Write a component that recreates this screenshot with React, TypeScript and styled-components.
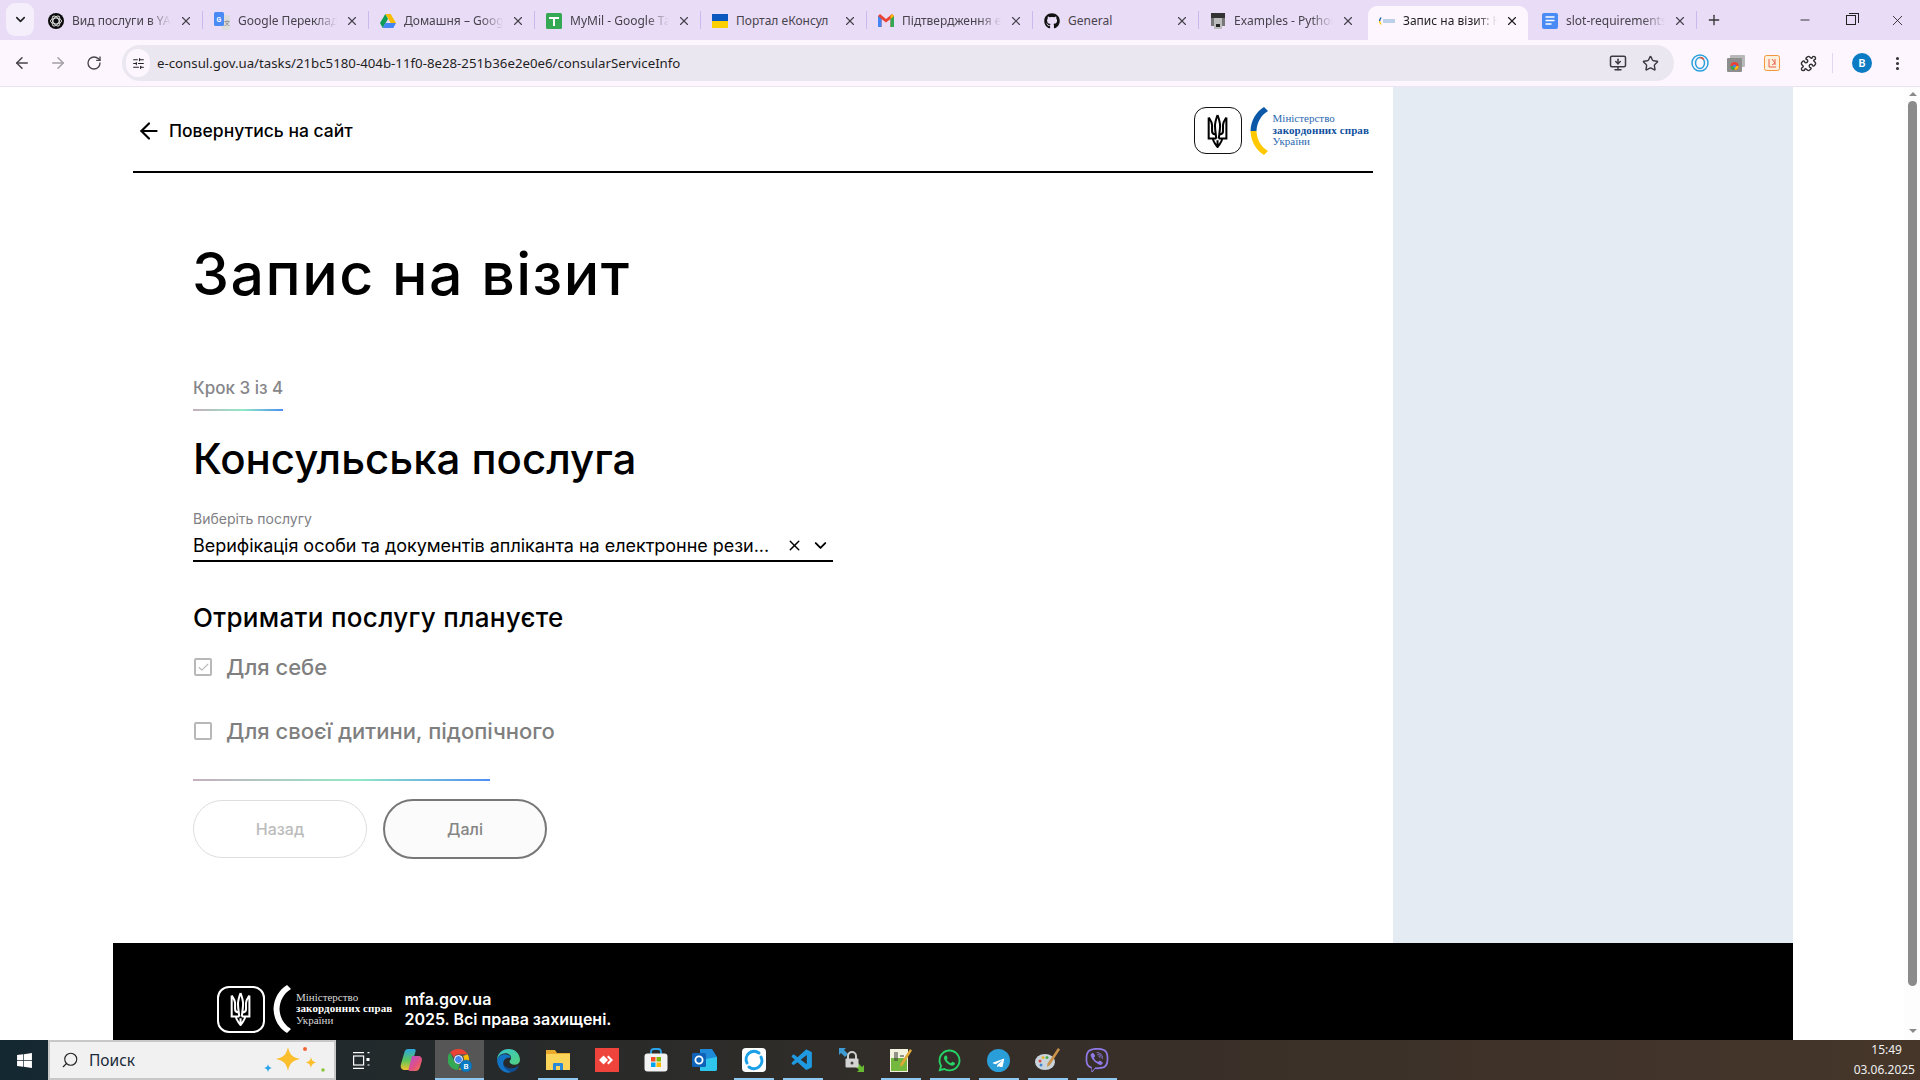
import React from "react";
import styled, { createGlobalStyle } from "styled-components";
import { ArrowLeft, ArrowRight, ChevronDown, MonitorDown, Plus, RotateCw, Search, Star, X, Minus, Puzzle, EllipsisVertical, SlidersHorizontal, Check } from "lucide-react";
import { FaGithub, FaWindows, FaWhatsapp, FaViber, FaTelegramPlane } from "react-icons/fa";
import { VscVscode } from "react-icons/vsc";

const Global = createGlobalStyle`
  html, body { margin: 0; padding: 0; overflow: hidden; background: #fff; }
  * { box-sizing: border-box; }
  #root { width: 1920px; height: 1080px; }
`;

const Screen = styled.div`
  width: 1920px; height: 1080px; display: flex; flex-direction: column; overflow: hidden;
  font-family: Inter, "Liberation Sans", sans-serif; color: #000;
`;

/* Browser chrome */
const TabStrip = styled.div`
  height: 40px; background: #e9dcf6; display: flex; align-items: flex-end; flex-shrink: 0; position: relative;
  font-family: "Noto Sans", "Open Sans", sans-serif;
`;
const TabSearch = styled.div`
  width: 28px; height: 33px; margin: 0 3px 1px 6px; border-radius: 9px; background: #f5eefb;
  display: flex; align-items: center; justify-content: center; color: #1f1f1f; align-self: center;
`;
const TabCell = styled.div<{ $sep: boolean }>`
  width: 166px; height: 34px; display: flex; align-items: center; padding: 0 0 6px;
  &::after { content: ""; width: 1px; height: 18px; flex-shrink: 0; background: ${p => (p.$sep ? "#c9b9ee" : "transparent")}; }
`;
const TabBody = styled.div<{ $active: boolean }>`
  flex: 1; min-width: 0; height: 34px; display: flex; align-items: center; gap: 8px; padding: 0 9px 5px 11px;
  margin: 0 ${p => (p.$active ? "2px" : "0")} -6px ${p => (p.$active ? "3px" : "0")};
  border-radius: 9px 9px 0 0; background: ${p => (p.$active ? "#fdf6fe" : "transparent")};
  color: ${p => (p.$active ? "#1f1f1f" : "#47434c")};
`;
const Favicon = styled.span`
  width: 16px; height: 16px; flex-shrink: 0; display: flex; align-items: center; justify-content: center;
`;
const TabTitle = styled.span<{ $fade: boolean }>`
  flex: 1; min-width: 0; font-size: 12px; white-space: nowrap; overflow: hidden;
  mask-image: ${p => (p.$fade ? "linear-gradient(90deg,#000 78%,transparent 100%)" : "none")};
`;
const NewTab = styled.div`
  width: 34px; height: 34px; display: flex; align-items: center; justify-content: center; color: #333; margin: 0 0 3px;
`;
const WindowControls = styled.div`
  margin-left: auto; display: flex; height: 40px; align-items: center; color: #222; align-self: flex-start;
`;
const WindowBtn = styled.div`
  width: 46px; height: 32px; display: flex; align-items: center; justify-content: center;
`;
const RestoreIcon = styled.span`
  width: 10px; height: 10px; border: 1px solid #222; position: relative; display: block;
  &::before { content: ""; position: absolute; left: 2px; top: -3px; width: 9px; height: 9px; border-top: 1px solid #222; border-right: 1px solid #222; }
`;
const Toolbar = styled.div`
  height: 47px; flex-shrink: 0; background: #fdf6fe; display: flex; align-items: center; padding: 0 0 0 4px; border-bottom: 1px solid #ece4f0;
`;
const NavBtn = styled.div<{ $dim?: boolean }>`
  width: 36px; height: 34px; display: flex; align-items: center; justify-content: center; color: ${p => (p.$dim ? "#a29fa6" : "#47434c")};
`;
const UrlPill = styled.div`
  width: 1552px; height: 36px; margin-left: 10px; border-radius: 18px; background: #ebe7f1; display: flex; align-items: center; padding: 0 8px 0 4px;
  font-family: "Noto Sans", "Open Sans", sans-serif; font-size: 13.25px; color: #1f1f1f;
`;
const SiteInfo = styled.div`
  width: 24px; height: 28px; margin-right: 7px; border-radius: 14px; background: #fdf6fe; display: flex; align-items: center; justify-content: center; color: #222;
`;
const UrlText = styled.span` flex: 1; white-space: nowrap; `;
const PillAction = styled.div`
  width: 32px; height: 32px; display: flex; align-items: center; justify-content: center; color: #3c3a40;
`;
const ExtArea = styled.div` display: flex; align-items: center; margin-left: 8px; flex: 1; `;
const ExtBtn = styled.div`
  width: 36px; height: 34px; display: flex; align-items: center; justify-content: center; color: #333;
`;
const ToolDivider = styled.span` width: 1px; height: 20px; background: #e1d8ee; margin: 0 12px 0 6px; `;
const Avatar = styled.div`
  width: 20px; height: 20px; border-radius: 50%; background: #0b7cc4; color: #fff; font: 600 11px Roboto, sans-serif;
  display: flex; align-items: center; justify-content: center; margin: 0 17px 0 7px;
`;

/* Page */
const Viewport = styled.div` flex: 1; min-height: 0; display: flex; background: #fff; `;
const Site = styled.div` flex: 1; padding: 0 111px 0 113px; display: flex; flex-direction: column; min-width: 0; `;
const MainRow = styled.div` flex: 1; min-height: 0; display: flex; `;
const Content = styled.main` width: 1280px; padding: 0 20px; `;
const Aside = styled.aside` flex: 1; background: #e4ebf3; `;
const Header = styled.header`
  height: 86px; border-bottom: 2px solid #000; display: flex; align-items: center; justify-content: space-between; padding: 3px 4px 0 3px;
`;
const BackLink = styled.div`
  display: flex; align-items: center; gap: 7px; font-size: 17.5px; font-weight: 500;
`;
const Ministry = styled.div` display: flex; align-items: center; `;
const EmblemBox = styled.div<{ $dark?: boolean }>`
  width: 48px; height: 47px; border-radius: 12px; display: flex; align-items: center; justify-content: center;
  border: ${p => (p.$dark ? "2px solid #fff" : "1px solid #111")}; color: ${p => (p.$dark ? "#fff" : "#000")};
`;
const ArcMark = styled.svg` width: 18px; height: 48px; margin: 0 5px 0 8px; flex-shrink: 0; `;
const MinistryText = styled.div<{ $dark?: boolean }>`
  font-family: "Liberation Serif", serif; font-size: 11px; line-height: 11.5px; white-space: nowrap;
  color: ${p => (p.$dark ? "#d8d8d8" : "#2a68b0")};
  b { display: block; font-weight: 700; color: ${p => (p.$dark ? "#fff" : "#0f4f9e")}; letter-spacing: 0.1px; }
`;
const Form = styled.div` padding: 0 0 0 60px; `;
const Title = styled.h1`
  margin: 0; padding-top: 64px; font-size: 59px; line-height: 74px; font-weight: 500; letter-spacing: 1.5px; margin-left: -1px;
`;
const Step = styled.div`
  margin-top: 64px; width: 90px; font-size: 17px; font-weight: 500; line-height: 26px; color: #86868a; white-space: nowrap;
`;
const Gradient = styled.div<{ $w: number }>`
  width: ${p => p.$w}px; height: 2px; background: linear-gradient(90deg, #c6afbd 0%, #93e8c6 55%, #4d8ff2 100%);
`;
const StepLine = styled(Gradient)` margin-top: 8px; `;
const Heading = styled.h2`
  margin: 22px 0 0; font-size: 42px; line-height: 52px; font-weight: 500;
`;
const FieldLabel = styled.div`
  margin-top: 25px; font-size: 14px; line-height: 18px; color: #808084;
`;
const SelectRow = styled.div`
  width: 640px; height: 34px; display: flex; align-items: center; border-bottom: 2px solid #000; font-size: 18px; font-weight: 400; padding-top: 3px;
`;
const SelectValue = styled.span` flex: 1; white-space: nowrap; overflow: hidden; letter-spacing: -0.03px; `;
const SelectIcon = styled.span` display: flex; width: 26px; justify-content: center; margin-right: 0; `;
const Sub = styled.h3`
  margin: 39px 0 0; font-size: 26px; line-height: 34px; font-weight: 500; letter-spacing: 0.33px;
`;
const CheckRow = styled.label<{ $mt: number }>`
  margin-top: ${p => p.$mt}px; display: flex; align-items: center; gap: 14px; height: 28px; font-size: 22px; font-weight: 500; color: #7f7f80;
`;
const CheckBox = styled.span`
  width: 18px; height: 18px; margin-left: 1px; border: 2px solid #b8b8b8; border-radius: 2px; display: flex; align-items: center; justify-content: center; color: #b8b8b8;
`;
const BottomLine = styled(Gradient)` margin-top: 34px; `;
const Buttons = styled.div` margin-top: 18px; display: flex; align-items: center; gap: 16px; `;
const BackBtn = styled.div`
  width: 174px; height: 58px; border-radius: 29px; border: 1px solid #dedede; display: flex; align-items: center; justify-content: center;
  font-size: 16px; font-weight: 500; color: #bcbcbc;
`;
const NextBtn = styled.div`
  width: 164px; height: 60px; border-radius: 30px; border: 2px solid #777; background: #fbfbfb; display: flex; align-items: center; justify-content: center;
  font-size: 16px; font-weight: 500; color: #858585;
`;
const Footer = styled.footer`
  height: 97px; flex-shrink: 0; background: #000; padding: 42px 0 0 104px; display: flex; align-items: flex-start; color: #fff;
`;
const FooterLogo = styled.div` display: flex; align-items: center; `;
const FooterText = styled.div`
  margin-left: 12px; padding-top: 5px; font-size: 16px; font-weight: 600; line-height: 19.5px; white-space: nowrap;
`;
const Scrollbar = styled.div`
  width: 16px; background: #fdfdfd; display: flex; flex-direction: column; align-items: center; color: #8a8a8a; padding: 5px 0 0;
`;
const ArrowUp = styled.span` width: 0; height: 0; border: 4px solid transparent; border-top: 0; border-bottom: 4px solid #8a8a8a; margin-left: 1px; `;
const ArrowDown = styled.span` width: 0; height: 0; border: 4px solid transparent; border-bottom: 0; border-top: 4px solid #8a8a8a; margin: 43px 0 0 1px; `;
const Thumb = styled.div` width: 9px; height: 885px; margin: 5px 0 0 1px; background: #8b8b8b; border-radius: 5px; `;

/* Taskbar */
const Taskbar = styled.div`
  height: 40px; flex-shrink: 0; display: flex; align-items: stretch;
  background: linear-gradient(90deg, #142832 0%, #262a2a 25%, #362e28 55%, #46362a 100%);
`;
const StartBtn = styled.div` width: 48px; display: flex; align-items: center; justify-content: center; color: #fff; `;
const SearchBox = styled.div`
  width: 288px; background: #f1f1f1; border: 2px solid #c8c8c8; display: flex; align-items: center; padding-left: 11px; gap: 10px;
  font: 400 15.5px "Noto Sans", "Open Sans", sans-serif; color: #1a2b3a;
`;
const SearchLabel = styled.span` flex: 1; `;
const TileRow = styled.div` display: flex; padding-left: 1px; `;
const Tile = styled.div<{ $active?: boolean; $run?: "wide" | "norm" }>`
  width: 49px; display: flex; align-items: center; justify-content: center; position: relative;
  background: ${p => (p.$active ? "#565656" : "transparent")};
  &::after {
    content: ""; position: absolute; bottom: 0; height: 2px; background: #8fc9f2;
    width: ${p => (p.$run === "wide" ? "49px" : p.$run === "norm" ? "40px" : "0")};
  }
`;
const Clock = styled.div`
  margin-left: auto; width: 72px; padding-right: 5px; display: flex; flex-direction: column; align-items: flex-end; justify-content: center; gap: 4px;
  font: 400 12px/16px "Noto Sans", "Open Sans", sans-serif; color: #efefef; text-align: center;
`;
const ClockTime = styled.span` padding-right: 13px; `;

/* Drawings */
const Trident = ({ size = 30 }: { size?: number }) => (
  <svg width={size * 0.62} height={size} viewBox="0 0 25 40" fill="none" stroke="currentColor" strokeWidth="2.4">
    <path d="M12.5 1 C11 5 9.5 9 9.5 14 C9.5 19 10.5 24 11 29 M12.5 1 C14 5 15.5 9 15.5 14 C15.5 19 14.5 24 14 29" />
    <path d="M2 4 V29 H11 M2 4 C4 7 6 9 6 13 V20 C6 23 8 24 10 24" />
    <path d="M23 4 V29 H14 M23 4 C21 7 19 9 19 13 V20 C19 23 17 24 15 24" />
    <path d="M7 29 C7 33 10 35 12.5 39 C15 35 18 33 18 29 M12.5 31 V37" />
  </svg>
);
const Arc = ({ dark }: { dark?: boolean }) => (
  <ArcMark viewBox="0 0 18 48">
    <path d="M14 0 L18 4 C10 9 7 16 6.5 24 H0.5 C1 13 6 5 14 0Z" fill={dark ? "#fff" : "#0b57a8"} />
    <path d="M14 48 L18 44 C10 39 7 32 6.5 24 H0.5 C1 35 6 43 14 48Z" fill={dark ? "#fff" : "#ffc800"} />
  </ArcMark>
);

const favicons: Record<string, React.ReactNode> = {
  gpt: <svg width="16" height="16" viewBox="0 0 16 16"><circle cx="8" cy="8" r="8" fill="#0b0b0b" /><g fill="none" stroke="#ddd" strokeWidth="1"><ellipse cx="8" cy="8" rx="5.5" ry="3" /><ellipse cx="8" cy="8" rx="5.5" ry="3" transform="rotate(60 8 8)" /><ellipse cx="8" cy="8" rx="5.5" ry="3" transform="rotate(120 8 8)" /></g></svg>,
  translate: <svg width="16" height="18" viewBox="0 0 16 18"><path d="M6 3h9a1 1 0 0 1 1 1v13a1 1 0 0 1-1 1H8z" fill="#ddd" /><rect x="0" y="0" width="10" height="14" rx="1.5" fill="#4a8af4" /><text x="2.5" y="9.5" fontSize="7" fontWeight="700" fill="#fff" fontFamily="Roboto">G</text><text x="10" y="13" fontSize="6" fill="#777" fontFamily="Noto Sans CJK SC">文</text></svg>,
  drive: <svg width="16" height="14" viewBox="0 0 16 14"><path d="M5.3 0h5.4l5.3 9h-5.3z" fill="#fbbc04" /><path d="M5.3 0 0 9l2.7 5 5.3-9z" fill="#0f9d58" /><path d="M2.7 14h10.6l2.7-5H5.4z" fill="#4285f4" /></svg>,
  sheets: <svg width="16" height="16" viewBox="0 0 16 16"><rect width="16" height="16" rx="1.5" fill="#34a853" /><path d="M3 4h10v2H9v7H7V6H3z" fill="#fff" /></svg>,
  flag: <svg width="16" height="14" viewBox="0 0 16 14"><rect width="16" height="7" fill="#0b57c0" /><rect y="7" width="16" height="7" fill="#fcd000" /></svg>,
  gmail: <svg width="16" height="13" viewBox="0 0 16 13"><path d="M0 2v11h3.5V5L8 8.5 12.5 5v8H16V2l-2-2-6 5-6-5z" fill="#ea4335" /><path d="M0 2v11h3.5V5z" fill="#4285f4" /><path d="M12.5 5v8H16V2z" fill="#34a853" /><path d="M14 0l2 2-3.5 3V2z" fill="#fbbc04" /></svg>,
  github: <FaGithub size={16} color="#111" />,
  examples: <svg width="14" height="16" viewBox="0 0 14 16"><rect y="0" width="14" height="5" fill="#333" /><rect y="5" width="14" height="8" fill="#777" /><path d="M3 5h8v11H3z" fill="#bbb" /><rect x="5" y="11" width="4" height="3" fill="#222" /></svg>,
  current: <svg width="16" height="8" viewBox="0 0 16 8"><path d="M2 0C0 2 0 3 0 4h1.3c0-1 .4-2 1.2-3z" fill="#0b57a8" /><path d="M2 8C0 6 0 5 0 4h1.3c0 1 .4 2 1.2 3z" fill="#ffc800" /><rect x="4" y="2" width="12" height="4" fill="#bcd0ea" /></svg>,
  docs: <svg width="16" height="16" viewBox="0 0 16 16"><rect width="16" height="16" rx="2" fill="#4a8af4" /><path d="M3.5 4h9M3.5 7.5h9M3.5 11h6" stroke="#fff" strokeWidth="1.6" /></svg>,
};

const tabs = [
  { icon: "gpt", title: "Вид послуги в YAML" },
  { icon: "translate", title: "Google Перекладач" },
  { icon: "drive", title: "Домашня – Google Диск" },
  { icon: "sheets", title: "MyMil - Google Таблиці" },
  { icon: "flag", title: "Портал еКонсул", noFade: true },
  { icon: "gmail", title: "Підтвердження електронної" },
  { icon: "github", title: "General", noFade: true },
  { icon: "examples", title: "Examples - Python" },
  { icon: "current", title: "Запис на візит: Консульська", active: true },
  { icon: "docs", title: "slot-requirements" },
];

const Chrome = () => (
  <svg width="24" height="24" viewBox="0 0 24 24">
    <path d="M10.5 1A10.5 10.5 0 0 1 19.6 6.2H10.5A4.6 4.6 0 0 0 6.2 9.2L2.1 4.6A10.5 10.5 0 0 1 10.5 1Z" fill="#ea4335" />
    <path d="M19.6 6.2A10.5 10.5 0 0 1 10.8 22L15 13.8A4.6 4.6 0 0 0 15 8Z" fill="#fbbc04" />
    <path d="M2.1 4.6 6.4 13.6A4.6 4.6 0 0 0 12 15.9L9.8 22A10.5 10.5 0 0 1 2.1 4.6Z" fill="#34a853" />
    <circle cx="10.5" cy="11.5" r="4" fill="#4285f4" stroke="#fff" strokeWidth="1" />
    <circle cx="18" cy="18" r="6" fill="#0b7cc4" stroke="#1a5d88" strokeWidth=".5" />
    <text x="18" y="21" fontSize="8" fontWeight="600" fill="#fff" textAnchor="middle" fontFamily="Roboto">B</text>
  </svg>
);
const Copilot = () => (
  <svg width="24" height="24" viewBox="0 0 24 24">
    <defs>
      <linearGradient id="cpa" x1="0" y1="0" x2="0" y2="1"><stop offset="0" stopColor="#2aa6e0" /><stop offset=".55" stopColor="#5fc65a" /><stop offset="1" stopColor="#f5c02c" /></linearGradient>
      <linearGradient id="cpb" x1="0" y1="0" x2="1" y2="1"><stop offset="0" stopColor="#b24cd8" /><stop offset=".6" stopColor="#e4527c" /><stop offset="1" stopColor="#f08a3c" /></linearGradient>
    </defs>
    <path d="M9 1h6c1 0 1.5.6 1.8 1.5L11 22H6C2.5 22 1 19.5 2 16L5.5 4C6 2 7.3 1 9 1Z" fill="url(#cpa)" />
    <path d="M13 8h6c3 0 4.5 2 3.8 5l-2 6.5C20 22 18.5 23 16.5 23H11c-1.5 0-1.8-1-1.4-2.2L13 8Z" fill="url(#cpb)" />
  </svg>
);
const Edge = () => (
  <svg width="25" height="25" viewBox="0 0 24 24">
    <defs>
      <linearGradient id="edg" x1="0" y1="0" x2="1" y2="1"><stop offset="0" stopColor="#37c6d0" /><stop offset="1" stopColor="#52d17c" /></linearGradient>
    </defs>
    <path d="M12 1C18.5 1 23 5.6 23 11.5c0 3-2.5 4.5-5 4.5-3 0-5-1-5-3 0-1.5 1.5-1.5 1.5-3.5C14.5 6.5 12 5 9 5 5.5 5 2.5 7 1 11 1.5 5.5 6 1 12 1Z" fill="url(#edg)" />
    <path d="M1 11c2-4 5-5 8-5 3 0 5 1.5 5 3.5-3-1-7 1-7 5 0 4 3.5 7.5 8 8.5-1 .5-2 .8-3 .8C6 23.8 1 18 1 11Z" fill="#1273c4" />
    <path d="M15 23c-4.5-1-8-4.5-8-8.5 0 3 4 5.5 8 5 3-.3 5.5-1 7-3-1 3.5-3.5 5.8-7 6.5Z" fill="#0c4f95" />
  </svg>
);
const Folder = () => (
  <svg width="26" height="24" viewBox="0 0 26 24">
    <path d="M1 2h9l2 3h13v17H1z" fill="#e9a92c" />
    <rect x="1" y="6" width="24" height="16" fill="#fbd55a" />
    <path d="M8 22v-6a1 1 0 0 1 1-1h8a1 1 0 0 1 1 1v6h-3v-4h-4v4z" fill="#2a88d8" />
  </svg>
);
const AnyDesk = () => (
  <svg width="24" height="24" viewBox="0 0 24 24">
    <rect width="24" height="24" fill="#ef443b" />
    <path d="M8.5 7.5 13 12l-4.5 4.5L4 12z" fill="#fff" />
    <path d="M13.5 7.5 18 12l-4.5 4.5-1.5-1.5 3-3-3-3z" fill="#fff" />
  </svg>
);
const Store = () => (
  <svg width="24" height="24" viewBox="0 0 24 24">
    <path d="M7 6V4a3 3 0 0 1 3-3h4a3 3 0 0 1 3 3v2" fill="none" stroke="#2aa3ea" strokeWidth="1.8" />
    <rect x="0.5" y="5.5" width="23" height="18" rx="3" fill="#f3f3f3" />
    <rect x="7" y="9" width="4.5" height="4.5" fill="#f25022" />
    <rect x="12.5" y="9" width="4.5" height="4.5" fill="#7fba00" />
    <rect x="7" y="14.5" width="4.5" height="4.5" fill="#00a4ef" />
    <rect x="12.5" y="14.5" width="4.5" height="4.5" fill="#ffb900" />
  </svg>
);
const Outlook = () => (
  <svg width="25" height="24" viewBox="0 0 25 24">
    <path d="M8 1h12l5 8v12a2 2 0 0 1-2 2H9a1 1 0 0 1-1-1z" fill="#1f8ad8" />
    <path d="M8 12 25 9v12a2 2 0 0 1-2 2H9a1 1 0 0 1-1-1z" fill="#2fc6ee" />
    <rect x="0" y="5" width="14" height="14" rx="1.5" fill="#0e63b8" />
    <circle cx="7" cy="12" r="3.6" fill="none" stroke="#fff" strokeWidth="1.8" />
  </svg>
);
const Ring = () => (
  <svg width="24" height="24" viewBox="0 0 24 24">
    <rect width="24" height="24" rx="4" fill="#fff" />
    <path d="M5 15A8 8 0 0 1 17 5" fill="none" stroke="#1aa0e8" strokeWidth="3" strokeLinecap="round" />
    <path d="M19 9A8 8 0 0 1 7 19" fill="none" stroke="#1aa0e8" strokeWidth="3" strokeLinecap="round" />
  </svg>
);
const LockSwap = () => (
  <svg width="25" height="24" viewBox="0 0 25 24">
    <path d="M0 0h7L5 2l4 4-3 3-4-4-2 2z" fill="#3e9ad2" />
    <path d="M25 24h-7l2-2-4-4 3-3 4 4 2-2z" fill="#66bb32" />
    <path d="M9 11V8a4 4 0 0 1 8 0v3" fill="none" stroke="#cfcfcf" strokeWidth="2" />
    <rect x="6.5" y="10.5" width="13" height="9" rx="1" fill="#d4d4d4" />
    <circle cx="13" cy="15" r="1.5" fill="#444" />
  </svg>
);
const Notepad = () => (
  <svg width="22" height="24" viewBox="0 0 22 24">
    <rect x="0" y="1" width="18" height="23" fill="#f2f2df" />
    <rect x="1" y="10" width="16" height="13" fill="#74b83e" />
    <path d="M5 4v9M7 4v9M10 8h4" stroke="#333" strokeWidth="1" />
    <path d="M20 1 22 2.5 13 17l-3 2 .5-3.5z" fill="#e0a838" />
  </svg>
);
const Palette = () => (
  <svg width="25" height="24" viewBox="0 0 25 24">
    <ellipse cx="10" cy="14" rx="10" ry="8" fill="#c9d4dc" />
    <circle cx="5" cy="13" r="1.5" fill="#d84b3c" />
    <circle cx="8" cy="9.5" r="1.5" fill="#e8b13a" />
    <circle cx="12" cy="9.5" r="1.5" fill="#4eaa4c" />
    <circle cx="6" cy="17" r="1.5" fill="#3d86d0" />
    <path d="M23 0l2 1.5L15 17l-3 2 .5-3.5z" fill="#c89248" />
  </svg>
);
const TelegramRound = () => (
  <svg width="23" height="23" viewBox="0 0 23 23">
    <circle cx="11.5" cy="11.5" r="11.5" fill="#2a9ed8" />
    <foreignObject x="5" y="5" width="13" height="13"><FaTelegramPlane size={13} color="#fff" /></foreignObject>
  </svg>
);
const Sparkles = () => (
  <svg width="70" height="36" viewBox="0 0 70 36">
    <path d="M24 5c1.6 7.5 4.4 10.4 12 12-7.6 1.6-10.4 4.4-12 12-1.6-7.6-4.4-10.4-12-12 7.6-1.6 10.4-4.500 12-12Z" fill="#fbbf2e" />
    <path d="M47 15c.7 3.5 2 4.8 5.5 5.5-3.5.7-4.8 2-5.5 5.5-.7-3.5-2-4.8-5.5-5.5 3.5-.7 4.8-2 5.5-5.5Z" fill="#fbbf2e" />
    <path d="M4 22c.5 2.6 1.5 3.6 4 4-2.5.5-3.5 1.5-4 4-.5-2.5-1.5-3.5-4-4 2.5-.4 3.5-1.4 4-4Z" fill="#2aa3ea" />
    <circle cx="41" cy="7" r="2" fill="#ee6a34" />
    <circle cx="59" cy="28" r="1.8" fill="#8cc63f" />
  </svg>
);
const TaskView = () => (
  <svg width="17" height="17" viewBox="0 0 17 17" fill="none" stroke="#fff" strokeWidth="1.2">
    <path d="M0 .6h11M0 16.4h11" />
    <rect x=".6" y="4" width="10" height="9" />
    <rect x="13.5" y="6" width="3" height="3" fill="#fff" stroke="none" />
    <path d="M14.5 .6h2M14.500 13h2" />
  </svg>
);

const taskItems: { node: React.ReactNode; run?: "wide" | "norm"; active?: boolean }[] = [
  { node: <TaskView /> },
  { node: <Copilot /> },
  { node: <Chrome />, run: "wide", active: true },
  { node: <Edge /> },
  { node: <Folder />, run: "norm" },
  { node: <AnyDesk /> },
  { node: <Store /> },
  { node: <Outlook /> },
  { node: <Ring />, run: "norm" },
  { node: <VscVscode size={25} color="#1f9ae0" />, run: "norm" },
  { node: <LockSwap /> },
  { node: <Notepad />, run: "norm" },
  { node: <FaWhatsapp size={25} color="#25d366" />, run: "norm" },
  { node: <TelegramRound />, run: "norm" },
  { node: <Palette />, run: "norm" },
  { node: <FaViber size={24} color="#8f7ae6" />, run: "norm" },
];

export default function App() {
  return (
    <Screen>
      <Global />
      <TabStrip>
        <TabSearch><ChevronDown size={15} strokeWidth={2.5} /></TabSearch>
        {tabs.map((t, i) => (
          <TabCell key={t.title} $sep={!t.active && !tabs[i + 1]?.active}>
            <TabBody $active={!!t.active}>
              <Favicon>{favicons[t.icon]}</Favicon>
              <TabTitle $fade={!t.noFade}>{t.title}</TabTitle>
              <X size={14} strokeWidth={2} />
            </TabBody>
          </TabCell>
        ))}
        <NewTab><Plus size={16} strokeWidth={2} /></NewTab>
        <WindowControls>
          <WindowBtn><Minus size={14} strokeWidth={1.5} /></WindowBtn>
          <WindowBtn><RestoreIcon /></WindowBtn>
          <WindowBtn><X size={17} strokeWidth={1.2} /></WindowBtn>
        </WindowControls>
      </TabStrip>
      <Toolbar>
        <NavBtn><ArrowLeft size={18} /></NavBtn>
        <NavBtn $dim><ArrowRight size={18} /></NavBtn>
        <NavBtn><RotateCw size={16} /></NavBtn>
        <UrlPill>
          <SiteInfo><SlidersHorizontal size={13} /></SiteInfo>
          <UrlText>e-consul.gov.ua/tasks/21bc5180-404b-11f0-8e28-251b36e2e0e6/consularServiceInfo</UrlText>
          <PillAction><MonitorDown size={18} /></PillAction>
          <PillAction><Star size={17} /></PillAction>
        </UrlPill>
        <ExtArea>
          <ExtBtn>
            <svg width="18" height="18" viewBox="0 0 18 18" fill="none"><circle cx="9" cy="9" r="8" stroke="#2aa0dc" strokeWidth="1.5" /><ellipse cx="9" cy="9" rx="4.5" ry="5.5" stroke="#2aa0dc" strokeWidth="1.5" /><path d="M9 3.5a5 5 0 0 1 4 2" stroke="#e05a3a" strokeWidth="1.5" /></svg>
          </ExtBtn>
          <ExtBtn>
            <svg width="18" height="17" viewBox="0 0 18 17"><rect x="3" y="0" width="15" height="12" rx="1" fill="#b8b8b8" /><rect x="0" y="3" width="15" height="14" rx="1" fill="#8e8e8e" /><circle cx="7.5" cy="11" r="4" fill="#ea4335" /><path d="M7.5 11v4a4 4 0 0 0 4-4z" fill="#fbbc04" /><path d="M7.5 11v4a4 4 0 0 1-4-4z" fill="#34a853" /><circle cx="7.5" cy="11" r="1.5" fill="#4285f4" /></svg>
          </ExtBtn>
          <ExtBtn>
            <svg width="16" height="16" viewBox="0 0 16 16"><rect x=".5" y=".5" width="15" height="15" rx="2" fill="#fdf0dc" stroke="#f0973a" /><path d="M5 4v8M5 12h7M8 4l3 4-3 2M11 4v6" stroke="#e8634a" strokeWidth="1" fill="none" /></svg>
          </ExtBtn>
          <ExtBtn><Puzzle size={17} /></ExtBtn>
          <ToolDivider />
          <Avatar>B</Avatar>
          <EllipsisVertical size={17} color="#333" strokeWidth={2.4} />
        </ExtArea>
      </Toolbar>
      <Viewport>
        <Site>
          <MainRow>
            <Content>
              <Header>
                <BackLink><ArrowLeft size={26} strokeWidth={2} />Повернутись на сайт</BackLink>
                <Ministry>
                  <EmblemBox><Trident size={34} /></EmblemBox>
                  <Arc />
                  <MinistryText>Міністерство<b>закордонних справ</b>України</MinistryText>
                </Ministry>
              </Header>
              <Form>
                <Title>Запис на візит</Title>
                <Step>Крок 3 із 4</Step>
                <StepLine $w={90} />
                <Heading>Консульська послуга</Heading>
                <FieldLabel>Виберіть послугу</FieldLabel>
                <SelectRow>
                  <SelectValue>Верифікація особи та документів апліканта на електронне рези...</SelectValue>
                  <SelectIcon><X size={17} strokeWidth={2} /></SelectIcon>
                  <SelectIcon><ChevronDown size={19} strokeWidth={2.4} /></SelectIcon>
                </SelectRow>
                <Sub>Отримати послугу плануєте</Sub>
                <CheckRow $mt={18}><CheckBox><Check size={13} strokeWidth={2} /></CheckBox>Для себе</CheckRow>
                <CheckRow $mt={36}><CheckBox />Для своєї дитини, підопічного</CheckRow>
                <BottomLine $w={297} />
                <Buttons>
                  <BackBtn>Назад</BackBtn>
                  <NextBtn>Далі</NextBtn>
                </Buttons>
              </Form>
            </Content>
            <Aside />
          </MainRow>
          <Footer>
            <FooterLogo>
              <EmblemBox $dark><Trident size={34} /></EmblemBox>
              <Arc dark />
              <MinistryText $dark>Міністерство<b>закордонних справ</b>України</MinistryText>
            </FooterLogo>
            <FooterText>mfa.gov.ua<br />2025. Всі права захищені.</FooterText>
          </Footer>
        </Site>
        <Scrollbar>
          <ArrowUp />
          <Thumb />
          <ArrowDown />
        </Scrollbar>
      </Viewport>
      <Taskbar>
        <StartBtn><FaWindows size={17} /></StartBtn>
        <SearchBox>
          <Search size={18} color="#222" style={{ transform: "scaleX(-1)" }} strokeWidth={1.5} />
          <SearchLabel>Поиск</SearchLabel>
          <Sparkles />
        </SearchBox>
        <TileRow>
          {taskItems.map((t, i) => (
            <Tile key={i} $active={t.active} $run={t.run}>{t.node}</Tile>
          ))}
        </TileRow>
        <Clock><ClockTime>15:49</ClockTime><span>03.06.2025</span></Clock>
      </Taskbar>
    </Screen>
  );
}
